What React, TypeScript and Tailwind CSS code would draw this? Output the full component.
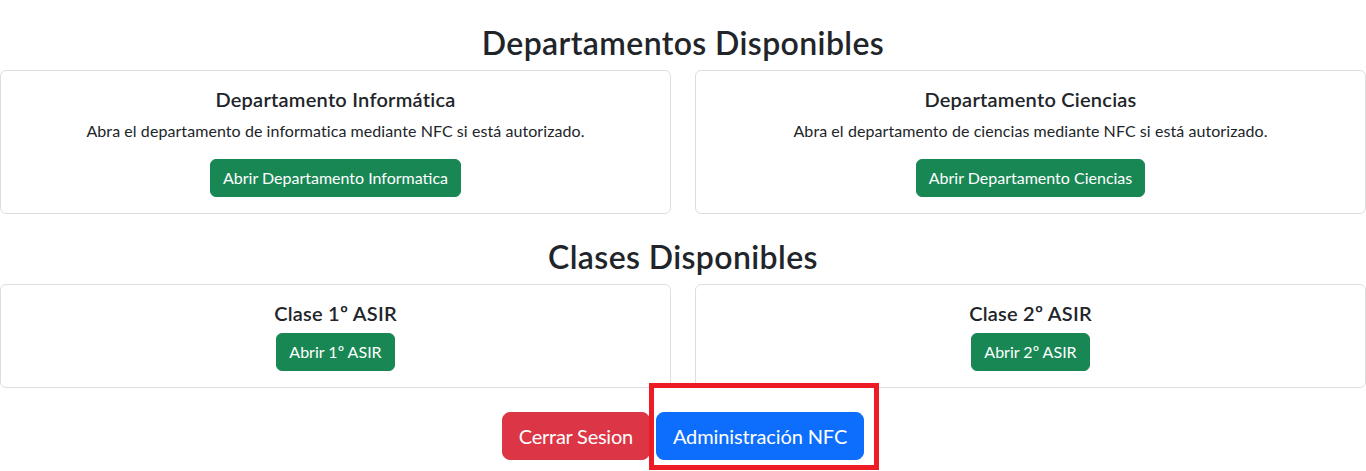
import React from 'react';

const font = { fontFamily: 'Lato, "Open Sans", sans-serif' };

const departamentos = [
  {
    title: 'Departamento Informática',
    text: 'Abra el departamento de informatica mediante NFC si está autorizado.',
    button: 'Abrir Departamento Informatica',
  },
  {
    title: 'Departamento Ciencias',
    text: 'Abra el departamento de ciencias mediante NFC si está autorizado.',
    button: 'Abrir Departamento Ciencias',
  },
];

const clases = [
  { title: 'Clase 1º ASIR', button: 'Abrir 1º ASIR' },
  { title: 'Clase 2º ASIR', button: 'Abrir 2º ASIR' },
];

const GreenButton: React.FC<{ label: string }> = ({ label }) => (
  <button className="inline-block rounded-[6px] border border-[#198754] bg-[#198754] px-3 py-1.5 text-base leading-6 text-white">
    {label}
  </button>
);

const App: React.FC = () => {
  return (
    <div className="min-h-[471px] overflow-hidden bg-white text-[#212529]" style={font}>
      {/* Departamentos */}
      <h2 className="mt-6 mb-2 text-center text-[32px] font-semibold leading-[38px] tracking-[0.012em]">
        Departamentos Disponibles
      </h2>
      <div className="grid grid-cols-2 gap-6">
        {departamentos.map((d) => (
          <div key={d.title} className="rounded-[6px] border border-[#dcdee0] p-4 text-center">
            <h5 className="mb-2 text-xl font-semibold leading-6 tracking-[0.012em]">{d.title}</h5>
            <p className="mb-4 text-base leading-6 tracking-[0.07px]">{d.text}</p>
            <GreenButton label={d.button} />
          </div>
        ))}
      </div>

      {/* Clases */}
      <h2 className="mt-6 mb-2 text-center text-[32px] font-semibold leading-[38px] tracking-[0.012em]">
        Clases Disponibles
      </h2>
      <div className="grid grid-cols-2 gap-6">
        {clases.map((c) => (
          <div key={c.title} className="rounded-[6px] border border-[#dcdee0] p-4 text-center">
            <h5 className="mb-2 text-xl font-semibold leading-6 tracking-[0.012em]">{c.title}</h5>
            <GreenButton label={c.button} />
          </div>
        ))}
      </div>

      {/* Acciones */}
      <div className="mt-6 flex justify-center gap-1.5">
        <button className="rounded-lg border border-[#dc3545] bg-[#dc3545] px-4 py-2 text-xl leading-[30px] tracking-[-0.25px] text-white">
          Cerrar Sesion
        </button>
        <div className="relative">
          <button className="rounded-lg border border-[#0d6efd] bg-[#0d6efd] px-4 py-2 text-xl leading-[30px] tracking-[-0.12px] text-white">
            Administración NFC
          </button>
          {/* resaltado */}
          <div className="pointer-events-none absolute -top-[29px] -left-[7px] h-[87px] w-[230px] border-[5px] border-[#ed1c24]" />
        </div>
      </div>
    </div>
  );
};

export default App;
